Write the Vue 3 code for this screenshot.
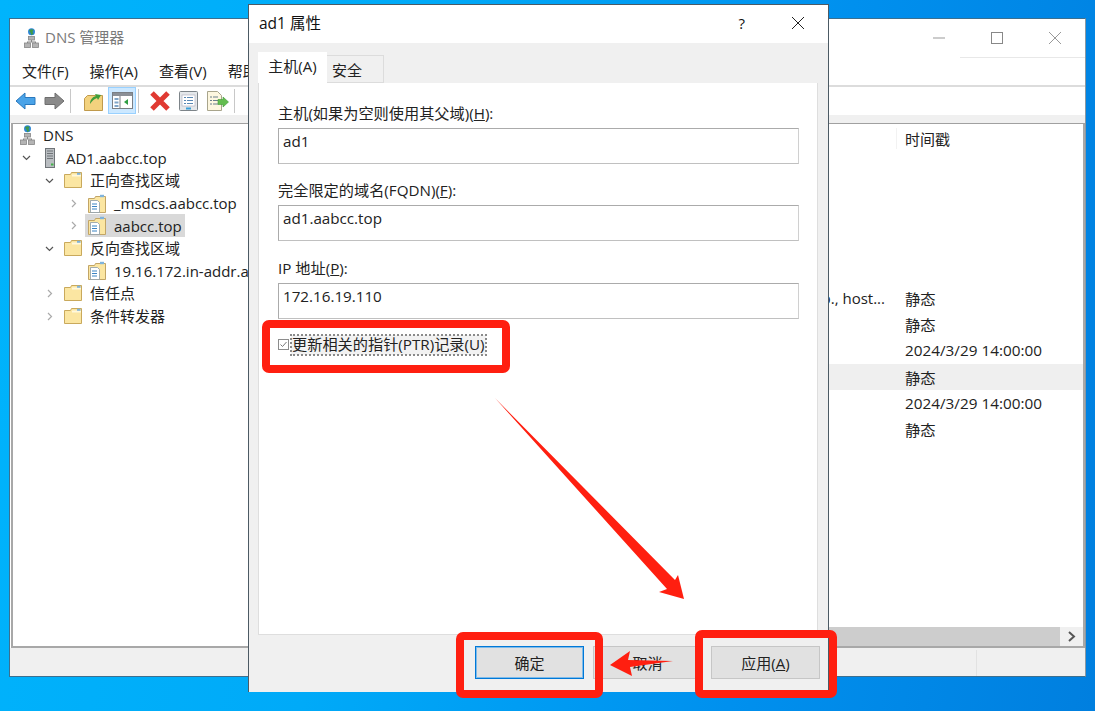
<template>
  <div class="desktop">
    <svg class="defs" width="0" height="0">
      <defs>
        <symbol id="net" viewBox="0 0 15 20">
          <circle cx="7.500" cy="3.800" r="3.500" fill="#2c86d6" />
          <path d="M5 2.500c1.500-1.500 3.500-1.500 4.500-.5L8.500 4l1 1.500-2 1.800-1-2.500z" fill="#3f9a4a" />
          <rect x="4.500" y="8.500" width="6" height="3.500" fill="#b4b4b4" stroke="#858585" stroke-width=".8" />
          <path d="M7 12h1v1.500h4v1.500h-1v-.5H4v.5H3v-1.500h4z" fill="#858585" />
          <rect x=".5" y="15" width="6" height="4.500" fill="#b4b4b4" stroke="#858585" stroke-width=".8" />
          <rect x="8.500" y="15" width="6" height="4.500" fill="#b4b4b4" stroke="#858585" stroke-width=".8" />
        </symbol>
        <symbol id="folder" viewBox="0 0 18 16">
          <path d="M.5 15.500v-13h6l1-2h10v15z" fill="#fbe6a2" stroke="#c9a95c" />
          <path d="M8 2.500h9v2H8z" fill="#fff8dc" />
          <path d="M13 .8h3.500v2H13z" fill="#7fb3dc" />
        </symbol>
        <symbol id="zone" viewBox="0 0 18 19">
          <path d="M.5 18.500v-14h6l1-2h10v16z" fill="#fbe6a2" stroke="#c2a566" />
          <path d="M12 .8h4v2.400h-4z" fill="#7fb3dc" />
          <path d="M2.500 6.500h7l2 2v10h-9z" fill="#fff" stroke="#8a9aa8" stroke-width=".8" />
          <path d="M4 10h5M4 12.500h5M4 15h5" stroke="#3b84c4" stroke-width="1.200" />
        </symbol>
      </defs>
    </svg>

    <section class="main-window">
      <header class="main-title">
        <svg class="app-icon" width="15" height="20"><use href="#net" /></svg>
        <span class="main-caption">DNS 管理器</span>
        <div class="win-controls">
          <svg width="14" height="14" viewBox="0 0 14 14"><path d="M1 7h12" stroke="#999" /></svg>
          <svg width="14" height="14" viewBox="0 0 14 14"><rect x="1.500" y="1.500" width="11" height="11" fill="none" stroke="#888" /></svg>
          <svg width="14" height="14" viewBox="0 0 14 14"><path d="M1 1l12 12M13 1L1 13" stroke="#999" /></svg>
        </div>
      </header>

      <nav class="menu-bar">
        <span>文件(F)</span>
        <span>操作(A)</span>
        <span>查看(V)</span>
        <span>帮助(H)</span>
      </nav>

      <div class="tool-bar">
        <svg class="tool tool-back" width="21" height="18" viewBox="0 0 21 18">
          <path d="M1 9l9-8v4.500h10v7H10V17z" fill="#4aa3e8" stroke="#2a78bd" />
        </svg>
        <svg class="tool tool-fwd" width="21" height="18" viewBox="0 0 21 18">
          <path d="M20 9l-9-8v4.500H1v7h10V17z" fill="#8a8a8a" stroke="#6e6e6e" />
        </svg>
        <i class="tool-sep"></i>
        <svg class="tool tool-up" width="19" height="20" viewBox="0 0 19 20">
          <path d="M.5 19.500v-12l3-3h15v15z" fill="#f3d27e" stroke="#c09a4c" />
          <path d="M6 13c0-4 2-7 6-8l-1-2 6 1-3 5-1-2c-3 1-5 3-7 6z" fill="#3f9e3a" />
        </svg>
        <span class="tool-active">
          <svg width="21" height="17" viewBox="0 0 21 17">
            <rect x=".5" y=".5" width="20" height="16" fill="#fff" stroke="#7a7f85" />
            <rect x="1" y="1" width="19" height="3" fill="#8b9097" />
            <path d="M2.500 6h4v2h-4zM2.500 9.500h4v2h-4zM2.500 13h4v2h-4z" fill="#7fa5c8" />
            <path d="M8 4v12" stroke="#7a7f85" />
            <path d="M16 7v6l-4-3z" fill="#2f9e44" />
          </svg>
        </span>
        <i class="tool-sep sep-b"></i>
        <svg class="tool tool-del" width="22" height="20" viewBox="0 0 22 20">
          <path d="M3 2l8 8 8-8M3 18l8-8 8 8" fill="none" stroke="#e03a32" stroke-width="5" />
        </svg>
        <svg class="tool tool-prop" width="19" height="20" viewBox="0 0 19 20">
          <rect x=".5" y=".5" width="18" height="19" rx="1" fill="#e4e7ea" stroke="#7d8489" />
          <rect x="3" y="4" width="13" height="11" fill="#fff" stroke="#aab" stroke-width=".6" />
          <path d="M5 6.500h2M8 6.500h6M5 9.500h2M8 9.500h6M5 12.500h2M8 12.500h6" stroke="#5a88b4" />
          <rect x="7" y="16.500" width="5" height="2" fill="#3aa0d8" />
        </svg>
        <svg class="tool tool-exp" width="22" height="20" viewBox="0 0 22 20">
          <path d="M.5.5h10l4 4v15H.5z" fill="#fdf7e0" stroke="#a9a58c" />
          <path d="M3 6h2M6 6h5M3 9.500h2M6 9.500h5M3 13h2M6 13h5" stroke="#6b7f8c" />
          <path d="M11 8.500h5V6l5.500 5-5.500 5v-2.500h-5z" fill="#63bd4f" stroke="#3f9a35" stroke-width=".6" />
        </svg>
        <i class="tool-sep sep-c"></i>
      </div>

      <div class="band"></div>

      <div class="panes">
        <aside class="tree">
          <div
            v-for="node in treeNodes"
            :key="node.label"
            class="tree-row"
            :style="{ paddingLeft: node.indent + 'px' }"
          >
            <span class="twisty">
              <svg v-if="node.open !== undefined" width="9" height="9" viewBox="0 0 9 9">
                <path v-if="node.open" d="M1 3l3.500 3.500L8 3" fill="none" stroke="#555" stroke-width="1.200" />
                <path v-else d="M3 1l3.500 3.500L3 8" fill="none" stroke="#aaa" stroke-width="1.200" />
              </svg>
            </span>
            <span class="node-body" :class="{ selected: node.selected }">
              <svg v-if="node.icon === 'net'" class="node-icon net" width="15" height="20"><use href="#net" /></svg>
              <svg v-else-if="node.icon === 'server'" class="node-icon server" width="10" height="20" viewBox="0 0 10 20">
                <rect x=".5" y=".5" width="9" height="19" fill="#b9bdc1" stroke="#6f7478" />
                <path d="M2 3h6M2 5.500h6M2 8h6M2 10.500h6" stroke="#6f7478" />
                <rect x="6" y="15.500" width="2.500" height="2" fill="#45b24a" />
              </svg>
              <svg v-else-if="node.icon === 'folder'" class="node-icon" width="18" height="16"><use href="#folder" /></svg>
              <svg v-else class="node-icon" width="18" height="19"><use href="#zone" /></svg>
              <span class="node-label">{{ node.label }}</span>
            </span>
          </div>
        </aside>

        <div class="list">
          <div class="list-head"><span>时间戳</span></div>
          <div class="list-rows">
            <div
              v-for="(row, i) in listRows"
              :key="i"
              class="list-row"
              :class="{ hot: row.hot }"
            >
              <span class="cell-data">{{ row.data }}</span>
              <span class="cell-time">{{ row.time }}</span>
            </div>
          </div>
          <div class="h-scroll">
            <span class="thumb"></span>
            <svg width="23" height="19" viewBox="0 0 23 19"><path d="M9 5l5 4.500-5 4.500" fill="none" stroke="#555" stroke-width="2" /></svg>
          </div>
        </div>
      </div>

      <footer class="status-bar">
        <i class="status-sep"></i>
      </footer>
    </section>

    <section class="dialog">
      <header class="dlg-title">
        <span class="dlg-caption">ad1 属性</span>
        <span class="dlg-help">?</span>
        <svg class="dlg-close" width="14" height="14" viewBox="0 0 14 14"><path d="M1 1l12 12M13 1L1 13" stroke="#222" /></svg>
      </header>

      <div class="dlg-body">
        <div class="tabs">
          <span class="tab active">主机(A)</span>
          <span class="tab">安全</span>
        </div>

        <div class="tab-pane">
          <div v-for="field in fields" :key="field.id" class="field">
            <label :for="field.id">{{ field.before }}<u>{{ field.key }}</u>{{ field.after }}</label>
            <input :id="field.id" type="text" :value="field.value" readonly />
          </div>

          <div class="check-row">
            <svg width="11" height="11" viewBox="0 0 11 11">
              <rect x=".5" y=".5" width="10" height="10" fill="#fff" stroke="#8c8c8c" />
              <path d="M2.500 5.500l2 2 4-4.500" fill="none" stroke="#777" />
            </svg>
            <span class="check-label">更新相关的指针(PTR)记录(U)</span>
          </div>
        </div>

        <div class="dlg-buttons">
          <button class="btn default" type="button">确定</button>
          <button class="btn" type="button">取消</button>
          <button class="btn" type="button">应用(<u>A</u>)</button>
        </div>
      </div>
    </section>

    <svg class="marks" width="1095" height="711" viewBox="0 0 1095 711">
      <g fill="none" stroke="#ff1f10" stroke-width="8">
        <rect x="266" y="324" width="240" height="45" rx="3" />
        <rect x="460" y="636" width="139" height="58" rx="3" />
        <rect x="699" y="634" width="134" height="60" rx="3" />
      </g>
      <path d="M495 398L675 580 678 575 684 599 659 592 667 589z" fill="#ff1f10" />
      <path d="M610 665L630 651 628 660 673 661 630 667 632 676z" fill="#ff1f10" />
    </svg>
  </div>
</template>

<script setup>
const treeNodes = [
  { label: "DNS", indent: 0, icon: "net" },
  { label: "AD1.aabcc.top", indent: 0, icon: "server", open: true },
  { label: "正向查找区域", indent: 23, icon: "folder", open: true },
  { label: "_msdcs.aabcc.top", indent: 47, icon: "zone", open: false },
  { label: "aabcc.top", indent: 47, icon: "zone", open: false, selected: true },
  { label: "反向查找区域", indent: 23, icon: "folder", open: true },
  { label: "19.16.172.in-addr.arpa", indent: 47, icon: "zone" },
  { label: "信任点", indent: 23, icon: "folder", open: false },
  { label: "条件转发器", indent: 23, icon: "folder", open: false },
];

const listRows = [
  { data: "[25], ad1.aabcc.top., host...", time: "静态" },
  { data: "", time: "静态" },
  { data: "", time: "2024/3/29 14:00:00" },
  { data: "", time: "静态", hot: true },
  { data: "", time: "2024/3/29 14:00:00" },
  { data: "", time: "静态" },
];

const fields = [
  { id: "host", before: "主机(如果为空则使用其父域)(", key: "H", after: "):", value: "ad1" },
  { id: "fqdn", before: "完全限定的域名(FQDN)(", key: "F", after: "):", value: "ad1.aabcc.top" },
  { id: "ip", before: "IP 地址(", key: "P", after: "):", value: "172.16.19.110" },
];
</script>

<style>
body {
  margin: 0;
}
</style>

<style scoped>
.desktop {
  position: relative;
  width: 1095px;
  height: 711px;
  overflow: hidden;
  background: linear-gradient(100deg, #00b4fc 0%, #00aaf8 35%, #0090ee 70%, #007fdf 100%);
  font-family: "Open Sans", "Noto Sans CJK SC", sans-serif;
  font-size: 15px;
  color: #222;
}

.defs {
  position: absolute;
}

/* windows on the desktop */
.main-window {
  position: absolute;
  left: 9px;
  top: 18px;
  width: 1077px;
  height: 659px;
  box-sizing: border-box;
  display: flex;
  flex-direction: column;
  background: #fff;
  border: 1px solid #3c6f8f;
  border-right-color: #8a98a2;
}

.main-title {
  height: 39px;
  flex: none;
  box-sizing: border-box;
  padding: 0 0 2px 14px;
  display: flex;
  align-items: center;
  position: relative;
}

.main-title::after {
  content: "";
  position: absolute;
  left: 950px;
  right: 0;
  bottom: 0;
  height: 1px;
  background: #e8e8e8;
}

.app-icon {
  margin-right: 6px;
}

.main-caption {
  color: #7a7a7a;
  font-size: 15px;
  padding-bottom: 2px;
}

.win-controls {
  margin-left: auto;
  display: flex;
  gap: 44px;
  padding-right: 23px;
}

.menu-bar {
  height: 27px;
  flex: none;
  box-sizing: content-box;
  display: flex;
  align-items: center;
  gap: 21px;
  padding: 0 0 0 12px;
  border-bottom: 2px solid #dcdcdc;
}

.menu-bar span {
  position: relative;
  top: -1px;
}

.tool-bar {
  height: 28px;
  flex: none;
  box-sizing: border-box;
  display: flex;
  align-items: center;
  padding: 0 0 1px 5px;
}

.tool {
  flex: none;
}

.tool-fwd {
  margin-left: 8px;
}

.tool-sep {
  width: 1px;
  height: 24px;
  margin: 0 13px 0 5px;
  background: #c8c8c8;
}

.tool-active {
  flex: none;
  box-sizing: border-box;
  width: 28px;
  height: 27px;
  margin-left: 5px;
  display: flex;
  align-items: center;
  justify-content: center;
  background: #cce8ff;
  border: 1px solid #99d1ff;
}

.sep-b {
  margin: 0 10px 0 2px;
}

.tool-prop {
  margin-left: 8px;
}

.tool-exp {
  margin-left: 9px;
}

.sep-c {
  margin-left: 5px;
}

.band {
  height: 8px;
  flex: none;
  background: #f0f0f0;
}

.panes {
  flex: 1;
  min-height: 0;
  display: flex;
  box-sizing: border-box;
  margin-left: 1px;
  border-top: 1px solid #a0a0a0;
  border-left: 2px solid #a8a8a8;
  border-right: 2px solid #a8a8a8;
  border-bottom: 2px solid #a8a8a8;
}

.tree {
  width: 236px;
  flex: none;
}

.tree-row {
  height: 22.6px;
  display: flex;
  align-items: center;
  white-space: nowrap;
}

.twisty {
  width: 25px;
  flex: none;
  padding-left: 9px;
  box-sizing: border-box;
  display: flex;
  align-items: center;
}

.tree-row:first-child .twisty {
  width: 4px;
  padding-left: 0;
}

.node-body {
  height: 22.6px;
  display: flex;
  align-items: center;
  padding: 0 3px;
}

.node-body.selected {
  background: #d9d9d9;
}

.node-icon {
  flex: none;
  margin-right: 8px;
}

.node-icon.server {
  margin: 0 11px 0 4px;
}

.node-label {
  line-height: 22px;
}

.list {
  flex: 1;
  min-width: 0;
  display: flex;
  flex-direction: column;
}

.list-head {
  height: 34px;
  flex: none;
  box-sizing: border-box;
  padding: 0 0 5px 647px;
  display: flex;
  align-items: center;
  white-space: nowrap;
}

.list-head span {
  padding-left: 8px;
  border-left: 1px solid #f2f2f2;
}

.list-rows {
  flex: 1;
  padding-top: 127px;
}

.list-row {
  height: 26.2px;
  display: flex;
  align-items: center;
  white-space: nowrap;
}

.list-row.hot {
  background: #efefef;
}

.cell-data {
  width: 636px;
  flex: none;
  text-align: right;
}

.cell-time {
  margin-left: 20px;
  font-size: 15.300px;
}

.h-scroll {
  height: 19px;
  flex: none;
  display: flex;
  background: #f0f0f0;
}

.thumb {
  flex: 1;
  background: #cdcdcd;
}

.status-bar {
  height: 28px;
  flex: none;
  position: relative;
  background: #f0f0f0;
}

.status-sep {
  position: absolute;
  left: 966px;
  top: 2px;
  bottom: 0;
  width: 1px;
  background: #e2e2e2;
}

.dialog {
  position: absolute;
  left: 248px;
  top: 4px;
  width: 581px;
  height: 688px;
  box-sizing: border-box;
  display: flex;
  flex-direction: column;
  background: #f0f0f0;
  border: 1px solid #4c5a64;
  border-bottom: 0;
}

.dlg-title {
  height: 38px;
  flex: none;
  box-sizing: border-box;
  display: flex;
  align-items: center;
  padding: 0 0 2px 10px;
  background: #fff;
  color: #111;
}

.dlg-caption {
  font-size: 15.500px;
  padding-bottom: 1px;
}

.dlg-help {
  margin-left: auto;
}

.dlg-close {
  margin: 0 23px 0 46px;
}

.dlg-body {
  flex: 1;
  min-height: 0;
  display: flex;
  flex-direction: column;
  padding: 11px 8px 0 9px;
}

.tabs {
  height: 29px;
  flex: none;
  display: flex;
  align-items: flex-end;
  position: relative;
  z-index: 1;
}

.tab {
  box-sizing: border-box;
  height: 28px;
  width: 57px;
  padding-left: 5px;
  display: flex;
  align-items: center;
  border: 1px solid #dcdcdc;
  border-left: 0;
}

.tab.active {
  height: 31px;
  width: 69px;
  padding: 0 0 4px;
  justify-content: center;
  background: #fff;
  border: 0;
  border-bottom: 1px solid #fff;
}

.tab-pane {
  width: 560px;
  height: 552px;
  flex: none;
  box-sizing: border-box;
  padding: 17px 0 0 19px;
  background: #fff;
  border: 1px solid #dedede;
  border-top: 0;
  font-size: 15.200px;
}

.field {
  height: 77.300px;
  display: flex;
  flex-direction: column;
}

.field label {
  height: 28px;
  line-height: 26px;
  white-space: nowrap;
}

.field input {
  box-sizing: border-box;
  width: 521px;
  height: 36px;
  padding: 0 4px 10px;
  border: 1px solid #ababab;
  border-right-color: #d0d0d0;
  border-bottom-color: #c0c0c0;
  outline: 0;
  font: inherit;
  color: #222;
  background: #fff;
}

.check-row {
  margin-top: 3px;
  display: flex;
  align-items: center;
  gap: 2px;
}

.check-label {
  padding: 0 1px;
  height: 20px;
  line-height: 19px;
  box-sizing: border-box;
  outline: 2px dotted #8a8a8a;
  outline-offset: -1px;
  background: #f2f2f2;
  white-space: nowrap;
}

.dlg-buttons {
  margin-top: 11px;
  display: flex;
  justify-content: flex-end;
  gap: 9px;
}

.btn {
  width: 109px;
  height: 33px;
  box-sizing: border-box;
  padding: 0;
  background: #e1e1e1;
  border: 1px solid #c6c6c6;
  font: inherit;
  color: #222;
}

.btn.default {
  border: 1px solid #0078d7;
  outline: 1px solid #7fbbe9;
  outline-offset: -2px;
}

.marks {
  position: absolute;
  left: 0;
  top: 0;
  pointer-events: none;
}
</style>
